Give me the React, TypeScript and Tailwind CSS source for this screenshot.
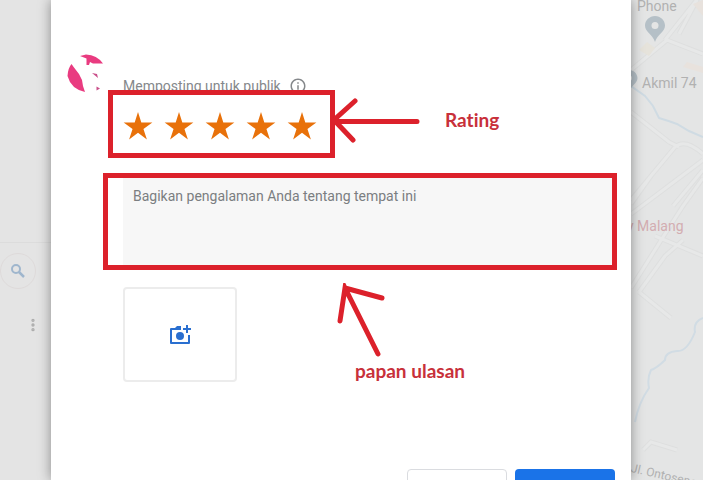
import { MoreVertical } from "lucide-react";
import { MdInfoOutline } from "react-icons/md";

const STARS = [1, 2, 3, 4, 5];

const ROADS = [
  "M0 70 36 40 72 54M34 40 72-8M48 34 66 0",
  "M0 112 38 142 48 147M44 147Q54 138 72 154",
  "M0 200 44 147M0 214 72 160M20 176 0 204M42 206 72 170M24 236 72 256",
  "M0 288 34 234 52 206 72 178M8 292 34 256 52 240",
  "M8 292 40 318M12 450 20 442 46 450",
];

function Pin({ className }: { className: string }) {
  return (
    <svg viewBox="0 0 20 26" className={className} aria-hidden="true">
      <path
        d="M10 0C4.500 0 0 4.300 0 9.600 0 16 7.500 18.500 10 26 12.500 18.500 20 16 20 9.600 20 4.300 15.500 0 10 0Z"
        fill="#b5c0c7"
      />
      <circle cx="10" cy="9.500" r="3.500" fill="#e4e5e5" />
    </svg>
  );
}

function Sidebar() {
  return (
    <aside className="w-[51px] shrink-0 bg-[#e4e4e4]">
      <div className="h-[243px] border-b border-[#dcdcdc]" />
      <button
        type="button"
        aria-label="Telusuri"
        className="mt-[10px] flex size-9 items-center justify-center rounded-full border border-[#dedada]"
      >
        <svg
          viewBox="0 0 14 14"
          className="size-[14px]"
          fill="none"
          stroke="#9fb6cd"
        >
          <circle cx="5" cy="5" r="4" strokeWidth="2" />
          <path d="M8 8 13 13" strokeWidth="2.500" />
        </svg>
      </button>
      <button
        type="button"
        aria-label="Menu"
        className="mt-7 ml-[25px] flex size-4 items-center justify-center text-[#adadad]"
      >
        <MoreVertical className="size-4" strokeWidth={3} />
      </button>
    </aside>
  );
}

function MapPanel() {
  return (
    <aside className="relative w-[72px] shrink-0 overflow-hidden bg-[#e4e5e5] font-[Roboto,sans-serif] text-sm leading-4 whitespace-nowrap text-[#b1b1b1]">
      <svg
        viewBox="0 0 72 480"
        className="absolute top-0 left-0 h-[480px] w-[72px]"
        fill="none"
        aria-hidden="true"
      >
        {/* Roads */}
        <path d={ROADS.join("")} stroke="#dedfdf" strokeWidth="5" />
        <path d={ROADS.join("")} stroke="#e7e8e8" strokeWidth="3" />
        <path d="M62 4 72 0V16ZM56 62l16 5v6l-20-6Z" fill="#e8e2dd" />
        <path d="M16 42 24 48 18 56 8 50Z" fill="#e6e3db" />
        {/* River */}
        <path
          d="M0 86 14 96 22 106 28 118Q38 121 46 124L58 131 72 137"
          stroke="#cfdbe3"
          strokeWidth="2"
        />
        <path
          d="M72 318Q62 322 64 332 56 352 46 351 34 352 34 360 26 368 20 370 16 378 18 388 8 402 4 422"
          stroke="#d1dce4"
          strokeWidth="2"
        />
      </svg>
      <span className="absolute top-[-2px] left-[6px]">Phone</span>
      <Pin className="absolute top-4 left-[14px] h-[26px] w-5" />
      <Pin className="absolute top-[70px] left-[-12px] h-[22px] w-5" />
      <span className="absolute top-[75px] left-[11px]">Akmil 74</span>
      <span className="absolute top-[218px] left-[-4px] text-[#d3adb1]">
        y Malang
      </span>
      <span className="absolute top-[460px] left-[2px] origin-top-left rotate-[13deg] text-xs">
        Jl. Ontoseno
      </span>
    </aside>
  );
}

function Avatar() {
  return (
    <svg viewBox="0 0 40 40" className="size-10 shrink-0" aria-hidden="true">
      <g fill="#e93b80">
        <path d="M13 3 19 1.500Q30 2 36 10.500H26L23 9 22 12H19.500V5.500Z" />
        <path d="M4.500 11 7 14.500 12 21 15 27 16 33 18 39Q4 36 .5 23 1 15 4.500 11Z" />
      </g>
      <path
        d="M25 20 30 21 31 25 28 22.500ZM29.500 33.500 33 35.500 29.500 37.500Z"
        fill="#c94f8a"
      />
    </svg>
  );
}

function StarRating() {
  return (
    <fieldset className="relative flex h-[68px] w-[227px] items-center border-[5px] border-[#dc212b] bg-white pt-1 pl-[10px]">
      <legend className="sr-only">Rating</legend>
      {STARS.map((value) => (
        <label key={value} className="flex w-[41px] shrink-0 cursor-pointer">
          <input
            type="radio"
            name="rating"
            value={value}
            defaultChecked={value === 5}
            aria-label={`${value} bintang`}
            className="sr-only"
          />
          <svg viewBox="0 0 28 28" className="size-[30px]" fill="#e8710a">
            <path d="M14 1 17.100 10.700H27.400L19.100 16.700 22.300 26.500 14 20.400 5.700 26.500 8.900 16.700.6 10.700H10.900Z" />
          </svg>
        </label>
      ))}
    </fieldset>
  );
}

function ReviewDialog() {
  return (
    <main className="relative z-10 min-w-0 flex-1 bg-white pt-[53px] font-[Roboto,sans-serif] text-sm shadow-[0_0_12px_rgba(0,0,0,0.4)]">
      {/* Author */}
      <div className="flex h-[37px] gap-4 pl-4">
        <Avatar />
        <p className="mt-[23px] flex h-5 items-center gap-2 leading-5 whitespace-nowrap text-[#85888b]">
          Memposting untuk publik
          <MdInfoOutline className="size-[18px]" />
        </p>
      </div>

      {/* Rating */}
      <div className="flex items-center pl-[57px]">
        <StarRating />
        <svg
          viewBox="0 0 90 48"
          className="relative -mt-1 -ml-1 h-12 w-[90px] shrink-0"
          fill="none"
          stroke="#dc212b"
          strokeWidth="5"
          strokeLinecap="round"
          aria-hidden="true"
        >
          <path d="M3 23.500H86M24 3 3 22 22 42" />
        </svg>
        <span className="-mt-2 ml-6 font-[Lato,sans-serif] text-[19px] leading-6 font-bold text-[#c8303a] [font-variant-ligatures:none]">
          Rating
        </span>
      </div>

      {/* Review text */}
      <div className="mt-[15px] mr-[14px] ml-[52px] border-[5px] border-[#dc212b] pl-[15px]">
        <textarea
          aria-label="Ulasan"
          placeholder="Bagikan pengalaman Anda tentang tempat ini"
          className="block h-[87px] w-full resize-none bg-[#f7f7f7] px-[10px] py-[10px] leading-4 outline-none placeholder:text-[#7b7e81]"
        />
      </div>

      {/* Photo upload */}
      <div className="mt-[17px] flex h-[95px] items-start pl-[72px]">
        <button
          type="button"
          aria-label="Tambahkan foto"
          className="flex h-[95px] w-[114px] shrink-0 items-center justify-center rounded border-2 border-[#ececec]"
        >
          <svg viewBox="0 0 22 20" className="h-5 w-[22px]" fill="none">
            <path
              d="M12 4H2V18H20V10"
              stroke="#2a6fd0"
              strokeWidth="2"
              strokeLinejoin="round"
            />
            <path d="M5 4 8 1H12V5H5Z" fill="#2a6fd0" />
            <circle cx="11" cy="11" r="4" fill="#2a6fd0" />
            <path d="M18 0V8M14 4H22" stroke="#2a6fd0" strokeWidth="2" />
          </svg>
        </button>
        <div className="-mt-1 ml-[98px]">
          <svg
            viewBox="0 0 50 76"
            className="h-[76px] w-[50px]"
            fill="none"
            stroke="#dc212b"
            strokeWidth="5"
            strokeLinecap="round"
            aria-hidden="true"
          >
            <path d="M43 71 10 5 5 38M10 5 47 15" />
          </svg>
          <p className="pl-5 font-[Lato,sans-serif] text-[19px] leading-6 font-bold whitespace-nowrap text-[#c8303a]">
            papan ulasan
          </p>
        </div>
      </div>

      {/* Actions */}
      <div className="mt-[87px] mr-4 flex justify-end gap-2">
        <button
          type="button"
          aria-label="Batal"
          className="h-9 w-[100px] rounded border border-[#dadce0]"
        />
        <button
          type="button"
          aria-label="Posting"
          className="h-9 w-[100px] rounded bg-[#1a73e8]"
        />
      </div>
    </main>
  );
}

export default function App() {
  return (
    <div className="flex h-screen overflow-hidden">
      <Sidebar />
      <ReviewDialog />
      <MapPanel />
    </div>
  );
}
